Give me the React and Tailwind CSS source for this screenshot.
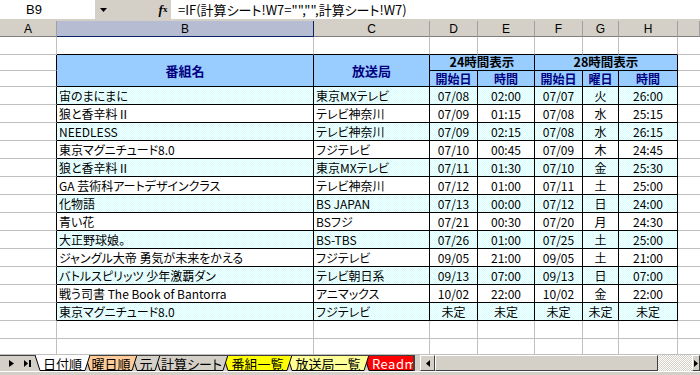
import React from 'react';

const rows = [
  ['宙のまにまに', '東京MXテレビ', '07/08', '02:00', '07/07', '火', '26:00'],
  ['狼と香辛料Ⅱ', 'テレビ神奈川', '07/09', '01:15', '07/08', '水', '25:15'],
  ['NEEDLESS', 'テレビ神奈川', '07/09', '02:15', '07/08', '水', '26:15'],
  ['東京マグニチュード8.0', 'フジテレビ', '07/10', '00:45', '07/09', '木', '24:45'],
  ['狼と香辛料Ⅱ', '東京MXテレビ', '07/11', '01:30', '07/10', '金', '25:30'],
  ['GA 芸術科アートデザインクラス', 'テレビ神奈川', '07/12', '01:00', '07/11', '土', '25:00'],
  ['化物語', 'BS JAPAN', '07/13', '00:00', '07/12', '日', '24:00'],
  ['青い花', 'BSフジ', '07/21', '00:30', '07/20', '月', '24:30'],
  ['大正野球娘。', 'BS-TBS', '07/26', '01:00', '07/25', '土', '25:00'],
  ['ジャングル大帝 勇気が未来をかえる', 'フジテレビ', '09/05', '21:00', '09/05', '土', '21:00'],
  ['バトルスピリッツ 少年激覇ダン', 'テレビ朝日系', '09/13', '07:00', '09/13', '日', '07:00'],
  ['戦う司書 The Book of Bantorra', 'アニマックス', '10/02', '22:00', '10/02', '金', '22:00'],
  ['東京マグニチュード8.0', 'フジテレビ', '未定', '未定', '未定', '未定', '未定'],
];

const tabs = [
  { label: '日付順', w: 55, cls: 'w-[55px] z-20', fill: '#ffffff', active: true },
  { label: '曜日順', w: 52, cls: 'w-[52px] z-[7]', fill: '#ffcc99' },
  { label: '元', w: 28, cls: 'w-[28px] z-[6]', fill: '#d4d0c8' },
  { label: '計算シート', w: 73, cls: 'w-[73px] z-[5]', fill: '#d4d0c8' },
  { label: '番組一覧', w: 69, cls: 'w-[69px] z-[4]', fill: '#ffff00' },
  { label: '放送局一覧', w: 82, cls: 'w-[82px] z-[3]', fill: '#ffff99' },
  { label: 'Readme', w: 62, cls: 'w-[62px] z-[2]', fill: '#ff0000', white: true },
];

const letters = ['A', 'B', 'C', 'D', 'E', 'F', 'G', 'H', ''];

const cols = 'grid grid-cols-[57px_257px_116px_48px_57px_48px_36px_59px_1fr]';
const dither = 'bg-[image:repeating-conic-gradient(#ccffff_0_25%,#ffffff_0_50%)] bg-[length:2px_2px]';
const head = 'flex items-center whitespace-nowrap leading-none border-r border-b border-black bg-[#99ccff] justify-center font-bold';

function Cell({ className = '', children }) {
  return (
    <div className={`flex items-center overflow-hidden whitespace-nowrap leading-none ${className}`}>
      {children}
    </div>
  );
}

function Tab({ tab, first }) {
  const w = tab.w;
  return (
    <div className={`relative h-[16px] shrink-0 ${tab.cls} ${first ? '' : '-ml-[5px]'}`}>
      <svg className="absolute inset-0" width={w} height={16}>
        <polygon points={`0,0 ${w},0 ${w - 5},15.5 5,15.5`} fill={tab.fill} />
        <polyline points={`0,0 5,15.5 ${w - 5},15.5 ${w},0`} fill="none" stroke="#000" strokeWidth="1" />
        {!tab.active && <line x1="0" y1="0.5" x2={w} y2="0.5" stroke="#404040" />}
      </svg>
      <div
        className={`relative flex h-full items-center justify-center text-[13px] leading-none whitespace-nowrap ${
          tab.white ? 'text-white tracking-[0.5px] justify-start pl-[8px]' : 'text-black'
        } ${tab.active ? 'underline underline-offset-2' : ''}`}
      >
        {tab.label}
      </div>
    </div>
  );
}

export default function App() {
  return (
    <div className="w-[700px] h-[375px] overflow-hidden bg-[#d4d0c8] font-['Noto_Sans_CJK_JP',sans-serif] [font-feature-settings:'palt'] text-black">
      {/* formula bar */}
      <div className="flex h-[21px] items-start bg-[#d4d0c8]">
        <div className="flex h-[19px] w-[95px] items-center bg-white pl-[26px] text-[13px] font-['Liberation_Sans',sans-serif]">
          B9
        </div>
        <div className="flex h-[19px] w-[17px] items-center justify-center">
          <svg width="7" height="4">
            <polygon points="0,0 7,0 3.5,4" fill="#000" />
          </svg>
        </div>
        <div className="w-[43px]" />
        <div className="flex h-[19px] w-[16px] items-center justify-center font-['Liberation_Serif',serif] text-[13px] italic font-bold leading-none">
          f<span className="text-[9px] not-italic">x</span>
        </div>
        <div className="flex h-[19px] flex-1 items-center bg-white pl-[7px] text-[13px] whitespace-nowrap">
          =IF(計算シート!W7="","",計算シート!W7)
        </div>
      </div>

      {/* column letters */}
      <div className={`${cols} h-[16px] bg-[#d4d0c8]`}>
        {letters.map((l, i) => (
          <Cell
            key={i}
            className={`justify-center text-[12px] font-['Liberation_Sans',sans-serif] ${
              l === 'B'
                ? 'bg-[#b6bdd2] border-r border-b border-[#0a246a]'
                : 'border-r border-b border-r-[#a0a0a0] border-b-[#808080]'
            }`}
          >
            {l}
          </Cell>
        ))}
      </div>

      {/* sheet */}
      <div className={`${cols} grid-rows-[18px_16px_16px_repeat(13,18px)_18px_16px] bg-white text-[12px]`}>
        {/* row 1 */}
        <Cell className="border-r border-b border-[#c0c0c0]" />
        {[0, 1, 2, 3, 4, 5, 6].map((i) => (
          <Cell key={i} className="border-r border-b border-r-[#c0c0c0] border-b-black" />
        ))}
        <Cell className="border-b border-[#c0c0c0]" />

        {/* header */}
        <Cell className="border-r border-b border-r-black border-b-[#c0c0c0]" />
        <div className={`${head} row-span-2 text-[13px] text-[#000080]`}>番組名</div>
        <div className={`${head} row-span-2 text-[13px] text-[#000080]`}>放送局</div>
        <div className={`${head} col-span-2 text-[12.5px]`}>24時間表示</div>
        <div className={`${head} col-span-3 text-[12.5px]`}>28時間表示</div>
        <Cell className="border-b border-[#c0c0c0]" />

        <Cell className="border-r border-b border-r-black border-b-[#c0c0c0]" />
        {['開始日', '時間', '開始日', '曜日', '時間'].map((t, i) => (
          <div key={i} className={`${head} text-[12px] text-[#000080]`}>
            {t}
          </div>
        ))}
        <Cell className="border-b border-[#c0c0c0]" />

        {rows.map((r, ri) => {
          const bg = ri % 2 === 0 ? dither : 'bg-white';
          return (
            <React.Fragment key={ri}>
              <Cell className="border-r border-b border-r-black border-b-[#c0c0c0]" />
              {r.map((v, ci) => (
                <Cell
                  key={ci}
                  className={`border-r border-b border-black ${bg} ${ci < 2 ? 'pl-[2px]' : 'justify-center'}`}
                >
                  {v}
                </Cell>
              ))}
              <Cell className="border-b border-[#c0c0c0]" />
            </React.Fragment>
          );
        })}

        {[0, 1].map((k) => (
          <React.Fragment key={k}>
            {[0, 1, 2, 3, 4, 5, 6, 7].map((i) => (
              <Cell key={i} className="border-r border-b border-[#c0c0c0]" />
            ))}
            <Cell className="border-b border-[#c0c0c0]" />
          </React.Fragment>
        ))}
      </div>

      {/* sheet tabs + scrollbar */}
      <div className="flex h-[16px] bg-[#d4d0c8]">
        <div className="flex w-[35px] shrink-0 items-center gap-[10px] pl-[9px] border-t border-[#404040]">
          <svg width="5" height="7">
            <polygon points="0,0 5,3.5 0,7" fill="#000" />
          </svg>
          <svg width="7" height="7">
            <polygon points="0,0 4,3.5 0,7" fill="#000" />
            <rect x="5" y="0" width="2" height="7" fill="#000" />
          </svg>
        </div>
        <div className="flex w-[378px] shrink-0 overflow-hidden">
          {tabs.map((t, i) => (
            <Tab key={t.label} tab={t} first={i === 0} />
          ))}
        </div>
        <div className="flex w-[7px] shrink-0 border-l-2 border-[#404040] bg-[#d4d0c8]" />
        <div className="flex flex-1 items-stretch">
          <div className="flex w-[15px] items-center justify-center border border-t-white border-l-white border-r-[#404040] border-b-[#404040] bg-[#d4d0c8]">
            <svg width="4" height="7">
              <polygon points="4,0 0,3.5 4,7" fill="#000" />
            </svg>
          </div>
          <div className="w-[223px] border border-t-white border-l-white border-r-[#404040] border-b-[#404040] bg-[#d4d0c8]" />
          <div className="w-[34px] bg-[image:repeating-conic-gradient(#ffffff_0_25%,#d4d0c8_0_50%)] bg-[length:2px_2px]" />
          <div className="flex flex-1 items-center justify-center border border-t-white border-l-white border-r-[#404040] border-b-[#404040] bg-[#d4d0c8]">
            <svg width="4" height="7">
              <polygon points="0,0 4,3.5 0,7" fill="#000" />
            </svg>
          </div>
        </div>
      </div>
      <div className="h-[4px] border-t border-white bg-[#d4d0c8]" />
    </div>
  );
}
